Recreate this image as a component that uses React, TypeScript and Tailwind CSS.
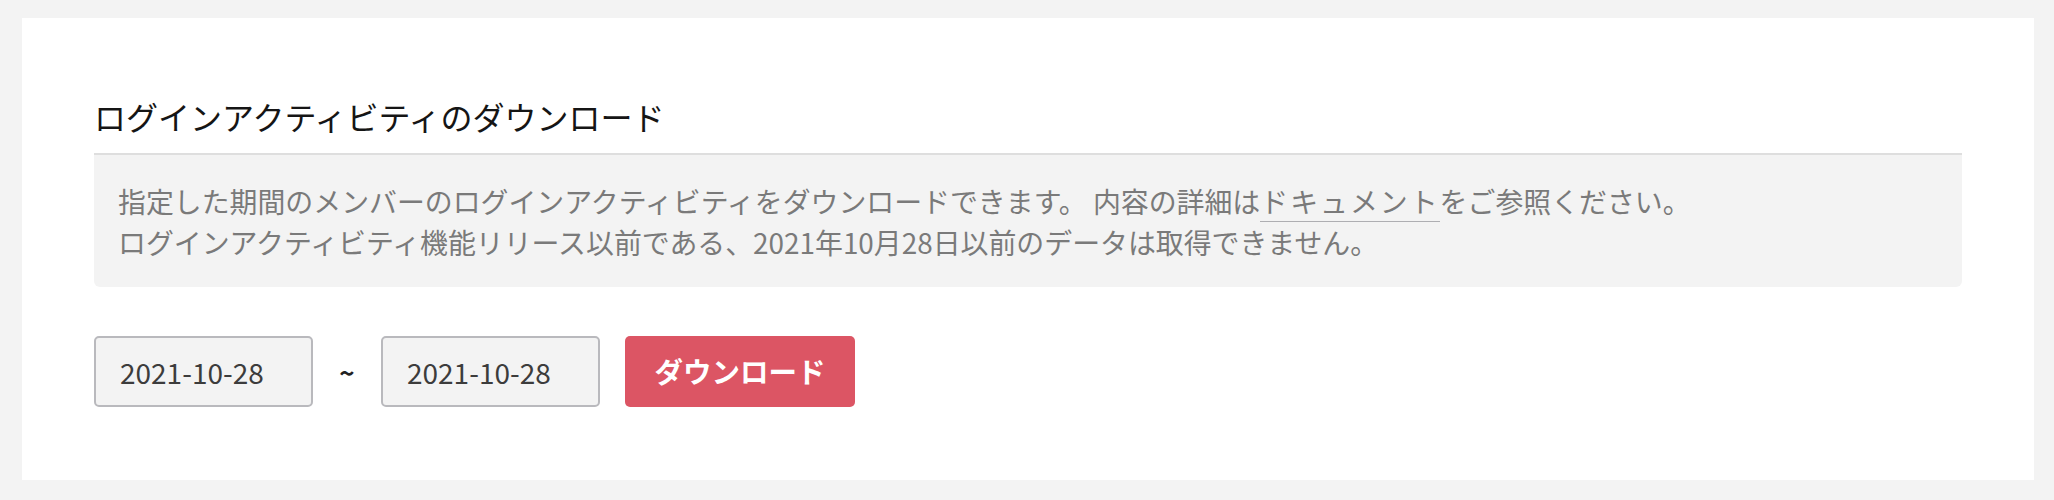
import React from 'react';

const font = { fontFamily: '"Noto Sans CJK JP", "Noto Sans", sans-serif' };

const DateField = ({ value }: { value: string }) => (
  <input
    type="text"
    readOnly
    defaultValue={value}
    className="w-[219px] h-[71px] pl-[24px] bg-[#f3f3f3] border-2 border-[#b9b9bd] rounded-[5px] text-[28px] text-[#3c3c3c] outline-none"
    style={font}
  />
);

export default function App() {
  return (
    <div className="min-h-[500px] bg-[#f3f3f3] pt-[18px] pl-[22px] pr-[20px] pb-[20px]" style={font}>
      <div className="bg-white px-[72px] pt-[72px] pb-[73px]">
        <h2 className="text-[32px] leading-[52px] font-normal text-[#151515] mb-[11px]">
          ログインアクティビティのダウンロード
        </h2>

        <div className="bg-[#f3f3f3] border-t-2 border-[#dedede] rounded-b-[6px] pl-[24px] pr-[24px] pt-[26px] pb-[24px] text-[27.9px] leading-[41px] text-[#7a7a7a]">
          <p>
            指定した期間のメンバーのログインアクティビティをダウンロードできます。 内容の詳細は
            <a href="#" className="tracking-[2px] border-b-[1.5px] border-[#aeaeb2]">
              ドキュメント
            </a>
            をご参照ください。
          </p>
          <p>ログインアクティビティ機能リリース以前である、2021年10月28日以前のデータは取得できません。</p>
        </div>

        <div className="flex items-center mt-[49px]">
          <DateField value="2021-10-28" />
          <span className="w-[68px] text-center text-[26px] font-semibold text-[#222]">~</span>
          <DateField value="2021-10-28" />
          <button className="ml-[25px] w-[230px] h-[71px] bg-[#dc5564] rounded-[5px] text-white text-[28.5px] font-bold">
            ダウンロード
          </button>
        </div>
      </div>
    </div>
  );
}
